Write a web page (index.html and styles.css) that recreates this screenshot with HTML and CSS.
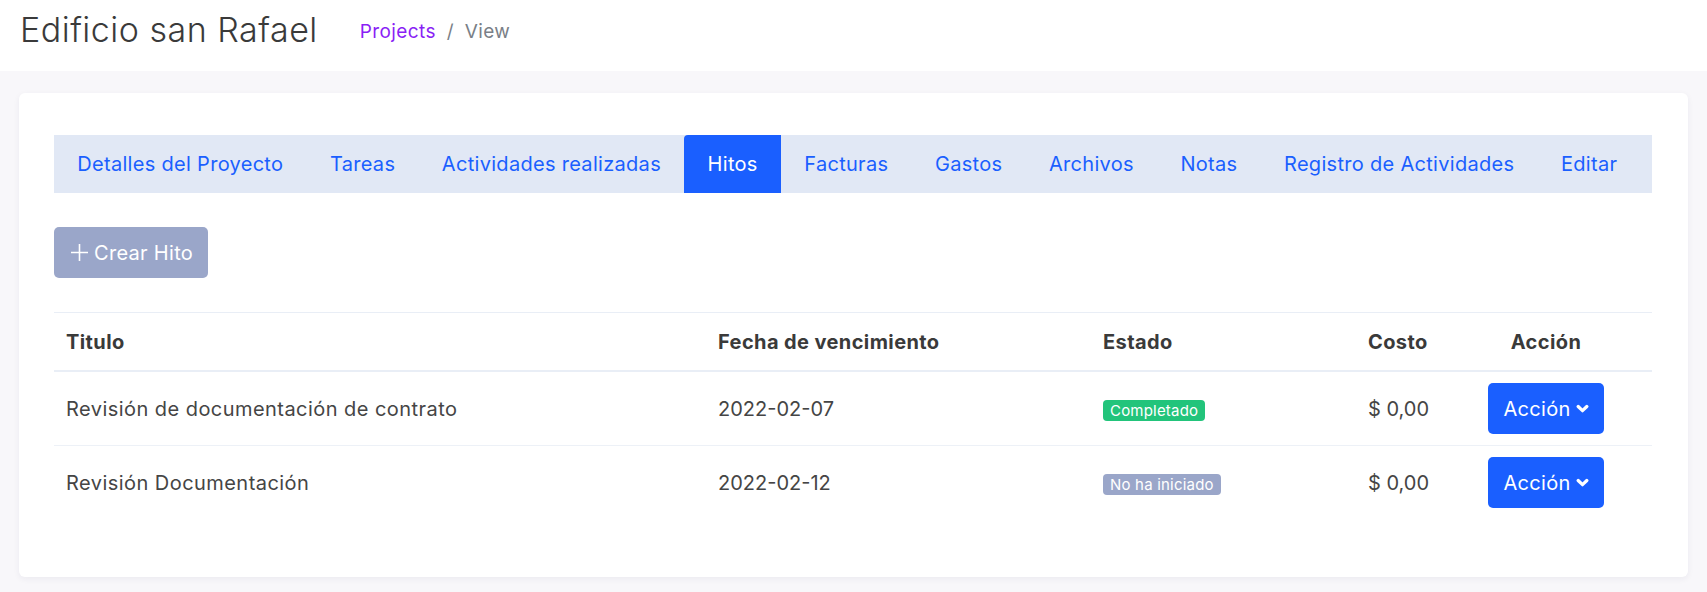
FILE: index.html
```html
<!DOCTYPE html>
<html lang="es">
<head>
  <meta charset="UTF-8" />
  <meta name="viewport" content="width=device-width, initial-scale=1.0"/>
  <title>Edificio san Rafael</title>
  <link rel="stylesheet" href="styles.css">
</head>
<body>
  <header class="topbar">
    <h1 class="page-title">Edificio san Rafael</h1>
    <nav class="crumbs">
      <a href="#">Projects</a>
      <span class="sep">/</span>
      <span class="current">View</span>
    </nav>
  </header>

  <main class="card">
    <ul class="tabs">
      <li><a href="#">Detalles del Proyecto</a></li>
      <li><a href="#">Tareas</a></li>
      <li><a href="#">Actividades realizadas</a></li>
      <li class="active"><a href="#">Hitos</a></li>
      <li><a href="#">Facturas</a></li>
      <li><a href="#">Gastos</a></li>
      <li><a href="#">Archivos</a></li>
      <li><a href="#">Notas</a></li>
      <li><a href="#">Registro de Actividades</a></li>
      <li><a href="#">Editar</a></li>
    </ul>

    <button class="btn-create">
      <svg width="19" height="19" viewBox="0 0 19 19"><path d="M9.5 1v17M1 9.5h17" stroke="#fff" stroke-width="1.6" fill="none"/></svg>
      Crear Hito
    </button>

    <table class="milestones">
      <colgroup>
        <col class="c-title">
        <col class="c-date">
        <col class="c-state">
        <col class="c-cost">
        <col class="c-action">
      </colgroup>
      <thead>
        <tr>
          <th>Titulo</th>
          <th>Fecha de vencimiento</th>
          <th>Estado</th>
          <th>Costo</th>
          <th class="center">Acción</th>
        </tr>
      </thead>
      <tbody>
        <tr>
          <td>Revisión de documentación de contrato</td>
          <td class="num">2022-02-07</td>
          <td><span class="badge done">Completado</span></td>
          <td class="num">$ 0,00</td>
          <td class="center">
            <button class="btn-action">Acción
              <svg width="13" height="13" viewBox="0 0 12 12"><path d="M2 4.2l4 3.8 4-3.8" stroke="#fff" stroke-width="3" fill="none" stroke-linecap="round" stroke-linejoin="round"/></svg>
            </button>
          </td>
        </tr>
        <tr>
          <td>Revisión Documentación</td>
          <td class="num">2022-02-12</td>
          <td><span class="badge pending">No ha iniciado</span></td>
          <td class="num">$ 0,00</td>
          <td class="center">
            <button class="btn-action">Acción
              <svg width="13" height="13" viewBox="0 0 12 12"><path d="M2 4.2l4 3.8 4-3.8" stroke="#fff" stroke-width="3" fill="none" stroke-linecap="round" stroke-linejoin="round"/></svg>
            </button>
          </td>
        </tr>
      </tbody>
    </table>
  </main>
</body>
</html>
```

FILE: styles.css
```css
body {
  margin: 0;
  background: #f8f7fa;
  font-family: Inter, "Open Sans", sans-serif;
  color: #454545;
}
.topbar {
  display: flex;
  align-items: center;
  height: 71px;
  padding: 0 20px;
  background: #fff;
}
.page-title {
  margin: 0 0 12px;
  font-size: 34px;
  font-weight: 300;
  letter-spacing: 0.5px;
  color: #3a3a3a;
}
.crumbs {
  margin: 0 0 8px 42px;
  font-size: 19px;
  letter-spacing: 0.4px;
  color: #7a7f87;
}
.crumbs a {
  color: #8a1ff5;
  text-decoration: none;
}
.crumbs .sep {
  margin: 0 5px;
}
.card {
  margin: 22px 19px 14px;
  padding: 42px 36px 42px 35px;
  background: #fff;
  border-radius: 6px;
  box-shadow: 0 2px 6px rgba(40, 40, 80, 0.06);
}
.tabs {
  display: flex;
  margin: 0;
  padding: 0;
  list-style: none;
  background: #e1e8f5;
}
.tabs li a {
  display: flex;
  align-items: center;
  height: 58px;
  padding: 0 23.3px;
  font-size: 20px;
  letter-spacing: 0.3px;
  color: #1a5fff;
  text-decoration: none;
}
.tabs li.active a {
  background: #1a5fff;
  color: #fff;
  border-top-left-radius: 4px;
}
.btn-create {
  display: flex;
  align-items: center;
  gap: 5px;
  height: 51px;
  margin-top: 34px;
  padding: 0 15px 0 16px;
  border: none;
  border-radius: 5px;
  background: #9aa6c9;
  color: #fff;
  font-family: inherit;
  font-size: 20px;
  letter-spacing: 0.3px;
}
.milestones {
  width: 100%;
  margin: 34px 0 16px;
  border-collapse: collapse;
  table-layout: fixed;
  border-top: 1px solid #e9eef6;
}
.c-title { width: 652px; }
.c-date { width: 385px; }
.c-state { width: 265px; }
.c-cost { width: 84px; }
.c-action { width: 212px; }
.milestones th {
  height: 57px;
  padding: 0 12px;
  text-align: left;
  font-size: 20px;
  font-weight: 700;
  letter-spacing: 0.4px;
  color: #3a3a3a;
  white-space: nowrap;
  border-bottom: 2px solid #e9eef6;
}
.milestones td {
  height: 73px;
  padding: 0 12px;
  font-size: 20px;
  letter-spacing: 0.45px;
  white-space: nowrap;
  border-bottom: 1px solid #edf1f7;
}
.milestones td.num {
  letter-spacing: 0;
}
.milestones tbody tr:last-child td {
  border-bottom: none;
}
.milestones .center {
  text-align: center;
}
.badge {
  display: inline-block;
  padding: 0 7px;
  line-height: 21px;
  border-radius: 4px;
  font-size: 15px;
  letter-spacing: 0.2px;
  color: #fff;
}
.badge.done { background: #22c47b; }
.badge.pending { background: #9aa6c9; }
.btn-action {
  display: inline-flex;
  align-items: center;
  gap: 5px;
  height: 51px;
  padding: 0 15px;
  border: none;
  border-radius: 5px;
  background: #1a5fff;
  color: #fff;
  font-family: inherit;
  font-size: 20px;
  letter-spacing: 0.3px;
}
```
